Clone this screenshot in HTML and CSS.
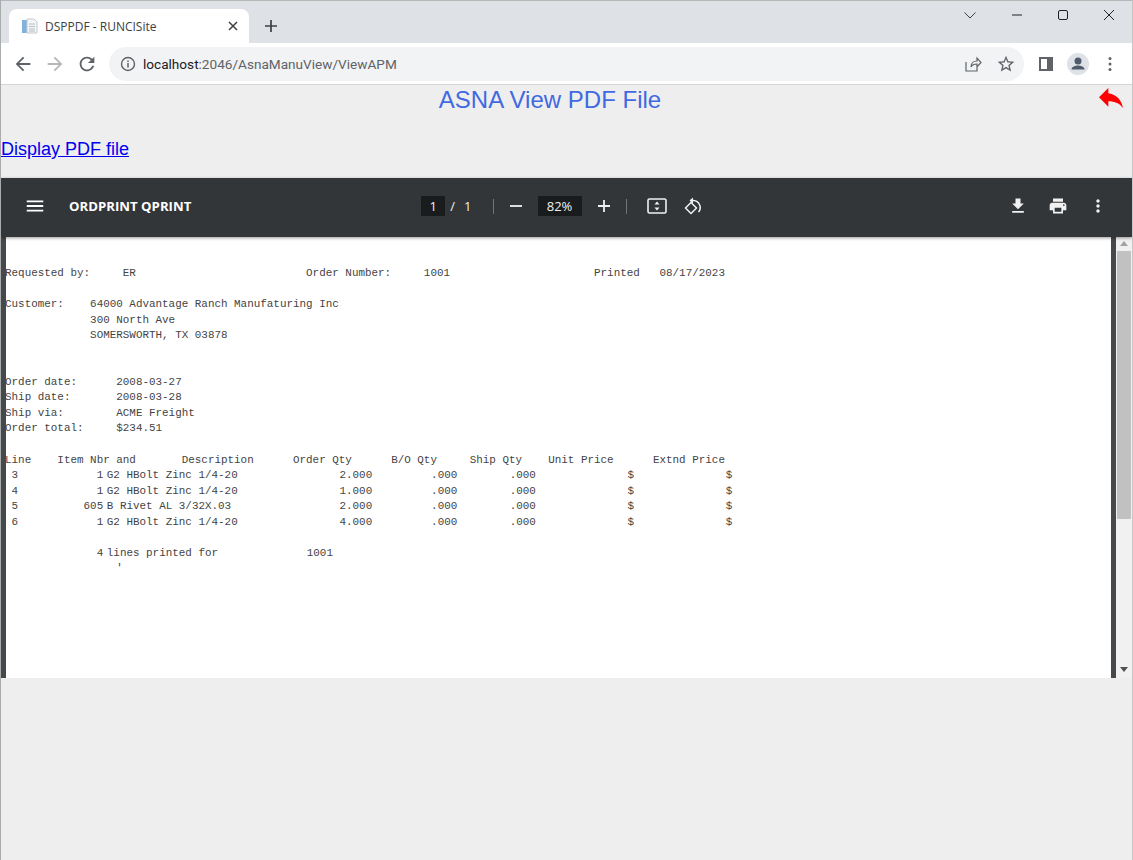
FILE: index.html
```html
<!doctype html>
<html lang="en-us">
<head>
    <meta charset="utf-8">
    <title>DSPPDF - RUNCISite</title>
    <link rel="stylesheet" href="styles.css">
</head>
<body>
    <!-- browser chrome -->
    <div class="tabstrip">
        <div class="tab">
            <svg class="favicon" viewBox="0 0 16 16" width="16" height="16">
                <rect x="0" y="2" width="5" height="13" fill="#7fb2dc"/>
                <path d="M5 1h7l3 3v11H5z" fill="#f3f5f7" stroke="#c3c9cf"/>
                <path d="M7 6h6M7 8.500h6M7 11h6M7 13h6" stroke="#b4bcc4"/>
            </svg>
            <span class="tabTitle">DSPPDF - RUNCISite</span>
            <svg class="tabClose" viewBox="0 0 10 10" width="10" height="10"><path d="M1 1l8 8M9 1l-8 8" stroke="#3c4043" stroke-width="1.500"/></svg>
        </div>
        <svg class="newTab" viewBox="0 0 12 12" width="12" height="12"><path d="M6 0v12M0 6h12" stroke="#3c4043" stroke-width="1.700"/></svg>
        <div class="windowBtns">
            <svg class="tabSearch" viewBox="0 0 12 12" width="12" height="12"><path d="M0.500 3.500l5.500 5.500 5.500-5.500" fill="none" stroke="#3c4043"/></svg>
            <svg viewBox="0 0 12 12" width="12" height="12"><path d="M1 6h10" stroke="#222" stroke-width="1"/></svg>
            <svg viewBox="0 0 12 12" width="12" height="12"><rect x="1.500" y="1.500" width="9" height="9" rx="1.500" fill="none" stroke="#222"/></svg>
            <svg viewBox="0 0 12 12" width="12" height="12"><path d="M1 1l10 10M11 1L1 11" stroke="#222"/></svg>
        </div>
    </div>
    <div class="toolbar">
        <svg class="navIcon" viewBox="0 0 24 24" width="22" height="22"><path fill="#5f6368" d="M20 11H7.830l5.590-5.590L12 4l-8 8 8 8 1.410-1.410L7.830 13H20v-2z"/></svg>
        <svg class="navIcon" viewBox="0 0 24 24" width="22" height="22"><path fill="#b4b7ba" d="M4 11h12.170l-5.590-5.590L12 4l8 8-8 8-1.410-1.410L16.170 13H4v-2z"/></svg>
        <svg class="navIcon" viewBox="0 0 24 24" width="22" height="22"><path fill="#5f6368" d="M17.650 6.350A7.958 7.958 0 0 0 12 4c-4.420 0-7.990 3.580-7.990 8s3.570 8 7.990 8c3.730 0 6.840-2.550 7.730-6h-2.080A5.990 5.990 0 0 1 12 18c-3.310 0-6-2.690-6-6s2.690-6 6-6c1.660 0 3.140.690 4.220 1.780L13 11h7V4l-2.350 2.350z"/></svg>
        <div class="addressBar">
            <svg viewBox="0 0 16 16" width="16" height="16"><circle cx="8" cy="8" r="6.500" fill="none" stroke="#5f6368" stroke-width="1.400"/><path d="M8 7v4.500M8 4.500v1.400" stroke="#5f6368" stroke-width="1.500"/></svg>
            <span class="url"><span class="urlHost">localhost</span>:2046/AsnaManuView/ViewAPM</span>
            <svg class="shareIcon" viewBox="0 0 18 18" width="18" height="18"><path d="M2 7v9h11v-4M7 12c0-4 3-6 6-6V3l4 4.500-4 4.500V9c-3 0-5 1-6 3z" fill="none" stroke="#5f6368" stroke-width="1.200"/></svg>
            <svg viewBox="0 0 24 24" width="20" height="20"><path fill="#5f6368" d="M22 9.240l-7.190-.620L12 2 9.190 8.630 2 9.240l5.460 4.730L5.820 21 12 17.270 18.180 21l-1.630-7.030L22 9.240zM12 15.400l-3.760 2.270 1-4.280-3.320-2.880 4.380-.380L12 6.100l1.710 4.040 4.380.380-3.320 2.880 1 4.280L12 15.400z"/></svg>
        </div>
        <svg class="sideIcon" viewBox="0 0 14 14" width="14" height="14"><rect width="14" height="14" fill="#5f6368"/><rect x="2" y="2" width="6" height="10" fill="#fff"/></svg>
        <div class="avatar">
            <svg viewBox="0 0 22 22" width="22" height="22"><circle cx="11" cy="8" r="3.500" fill="#4f5b6b"/><path d="M4.500 16.500c0-3 4-4 6.500-4s6.500 1 6.500 4z" fill="#4f5b6b"/></svg>
        </div>
        <svg class="chromeMenu" viewBox="0 0 4 16" width="4" height="16"><circle cx="2" cy="2.500" r="1.500" fill="#5f6368"/><circle cx="2" cy="8" r="1.500" fill="#5f6368"/><circle cx="2" cy="13.500" r="1.500" fill="#5f6368"/></svg>
    </div>

    <!-- page -->
    <div class="page">
        <div class="titleRow">
            <h1 class="pageTitle">ASNA View PDF File</h1>
            <svg class="backIcon" viewBox="3 5 18 15" width="24" height="20"><path fill="#f00" d="M10 9V5l-7 7 7 7v-4.100c5 0 8.500 1.600 11 5.100-1-5-4-10-11-11z"/></svg>
        </div>
        <a class="displayLink" href="#">Display PDF file</a>

        <div class="viewer">
            <div class="pdfBar">
                <div class="pdfLeft">
                    <svg viewBox="0 0 24 24" width="22" height="22"><path fill="#fff" d="M3 18h18v-2H3v2zm0-5h18v-2H3v2zm0-7v2h18V6H3z"/></svg>
                    <span class="pdfTitle">ORDPRINT QPRINT</span>
                </div>
                <div class="pdfMiddle">
                    <span class="pageInput">1</span>
                    <span class="pageSlash">/</span>
                    <span class="pageTotal">1</span>
                    <span class="pdfSep"></span>
                    <svg class="zoomOut" viewBox="0 0 14 14" width="14" height="14"><path d="M1 7h12" stroke="#f1f1f1" stroke-width="1.800"/></svg>
                    <span class="zoomInput">82%</span>
                    <svg class="zoomIn" viewBox="0 0 14 14" width="14" height="14"><path d="M1 7h12M7 1v12" stroke="#f1f1f1" stroke-width="1.800"/></svg>
                    <span class="pdfSep second"></span>
                    <svg class="fitIcon" viewBox="0 0 20 18" width="20" height="18"><rect x="1" y="2" width="18" height="14" rx="1.500" fill="none" stroke="#f1f1f1" stroke-width="1.600"/><path d="M10 4.500l2.500 3h-5zM10 13.500l2.500-3h-5z" fill="#f1f1f1"/></svg>
                    <svg class="rotateIcon" viewBox="0 0 20 20" width="20" height="20"><path d="M8 6.500L2.500 12 8 17.500l5.500-5.500z" fill="none" stroke="#f1f1f1" stroke-width="1.500"/><path d="M7.500 4.500h3a7 7 0 0 1 5 11.500" fill="none" stroke="#f1f1f1" stroke-width="1.500"/><path d="M10 1.500L6.500 4.500 10 7.500z" fill="#f1f1f1"/></svg>
                </div>
                <div class="pdfRight">
                    <svg viewBox="0 0 24 24" width="20" height="20"><path fill="#f1f1f1" d="M19 9h-4V3H9v6H5l7 7 7-7zM5 18v2h14v-2H5z"/></svg>
                    <svg viewBox="0 0 24 24" width="20" height="20"><path fill="#f1f1f1" d="M19 8H5c-1.660 0-3 1.340-3 3v6h4v4h12v-4h4v-6c0-1.660-1.340-3-3-3zm-3 11H8v-5h8v5zm3-7c-.550 0-1-.450-1-1s.450-1 1-1 1 .450 1 1-.450 1-1 1zm-1-9H6v4h12V3z"/></svg>
                    <svg viewBox="0 0 24 24" width="20" height="20"><path fill="#f1f1f1" d="M12 8c1.100 0 2-.900 2-2s-.900-2-2-2-2 .900-2 2 .900 2 2 2zm0 2c-1.100 0-2 .900-2 2s.900 2 2 2 2-.900 2-2-.900-2-2-2zm0 6c-1.100 0-2 .900-2 2s.900 2 2 2 2-.900 2-2-.900-2-2-2z"/></svg>
                </div>
            </div>
            <div class="pdfBody">
                <div class="pdfSheet">
                    <div class="report">
                        <div class="line">Requested by:     ER                          Order Number:     1001                      Printed   08/17/2023</div>
                        <div class="line"></div>
                        <div class="line">Customer:    64000 Advantage Ranch Manufaturing Inc</div>
                        <div class="line">             300 North Ave</div>
                        <div class="line">             SOMERSWORTH, TX 03878</div>
                        <div class="line"></div>
                        <div class="line"></div>
                        <div class="line">Order date:      2008-03-27</div>
                        <div class="line">Ship date:       2008-03-28</div>
                        <div class="line">Ship via:        ACME Freight</div>
                        <div class="line">Order total:     $234.51</div>
                        <div class="line"></div>
                        <div class="line">Line    Item Nbr and       Description      Order Qty      B/O Qty     Ship Qty    Unit Price      Extnd Price</div>
                        <div class="line"> 3            1<span class="thin"> </span>G2 HBolt Zinc 1/4-20<span class="thin"> </span>               2.000         .000        .000              $              $</div>
                        <div class="line"> 4            1<span class="thin"> </span>G2 HBolt Zinc 1/4-20<span class="thin"> </span>               1.000         .000        .000              $              $</div>
                        <div class="line"> 5          605<span class="thin"> </span>B Rivet AL 3/32X.03<span class="thin"> </span>                2.000         .000        .000              $              $</div>
                        <div class="line"> 6            1<span class="thin"> </span>G2 HBolt Zinc 1/4-20<span class="thin"> </span>               4.000         .000        .000              $              $</div>
                        <div class="line"></div>
                        <div class="line">              4<span class="thin"> </span>lines printed for<span class="thin"> </span>             1001</div>
                        <div class="line">                 '</div>
                    </div>
                </div>
                <div class="scrollbar">
                    <span class="arrowUp"></span>
                    <span class="thumb"></span>
                    <span class="arrowDown"></span>
                </div>
            </div>
        </div>
    </div>
</body>
</html>
```
FILE: styles.css
```css
html, body {
    width: 100%;
    height: 100%;
}

body {
    margin: 0;
    padding: 0;
    height: 860px;
    overflow: hidden;
    background: #eeeeee;
    font-family: "Liberation Sans", Arial, sans-serif;
    display: flex;
    flex-direction: column;
    box-sizing: border-box;
    border-left: 1px solid #a8acaa;
    border-right: 1px solid #c4c6c8;
}

/* browser chrome */
.tabstrip {
    height: 43px;
    flex: none;
    box-sizing: border-box;
    background: #dee1e6;
    border-top: 1px solid #b3b8b6;
    display: flex;
    align-items: flex-end;
    padding-left: 8px;
}

.tab {
    width: 240px;
    height: 34px;
    box-sizing: border-box;
    background: #fff;
    border-radius: 8px 8px 0 0;
    display: flex;
    align-items: center;
    padding: 0 11px 0 13px;
}

.tabTitle {
    margin-left: 7px;
    flex: 1;
    font-family: "Open Sans", sans-serif;
    font-size: 12px;
    color: #3c4043;
}

.newTab {
    margin: 0 0 11px 16px;
}

.windowBtns {
    margin-left: auto;
    align-self: flex-start;
    display: flex;
    gap: 34px;
    padding: 8px 17px 0 0;
}

.tabSearch {
    margin-right: 1px;
}

.toolbar {
    height: 42px;
    flex: none;
    box-sizing: border-box;
    background: #fff;
    border-bottom: 1px solid #d5d6d8;
    display: flex;
    align-items: center;
    padding: 0 15px 0 11px;
}

.navIcon {
    margin-right: 10px;
}

.addressBar {
    width: 915px;
    height: 34px;
    margin-left: 1px;
    box-sizing: border-box;
    background: #f1f3f4;
    border-radius: 17px;
    display: flex;
    align-items: center;
    padding: 0 8px 0 11px;
}

.url {
    flex: 1;
    margin-left: 7px;
    font-family: Roboto, sans-serif;
    font-size: 13.600px;
    color: #5f6368;
}

.urlHost {
    color: #202124;
}

.shareIcon {
    margin-right: 14px;
}

.sideIcon {
    margin-left: 15px;
}

.avatar {
    width: 22px;
    height: 22px;
    margin-left: 14px;
    border-radius: 50%;
    background: #dee1e6;
}

.chromeMenu {
    margin-left: 19px;
}

/* page content */
.page {
    flex: 1;
    background: #eeeeee;
}

.titleRow {
    display: flex;
    height: 30px;
}

.pageTitle {
    flex: 1;
    margin: 0;
    padding-top: 1px;
    font-size: 24px;
    line-height: 28px;
    font-weight: normal;
    text-align: center;
    color: #4169e1;
}

.backIcon {
    margin: 3px 9px 0 0;
}

.displayLink {
    display: block;
    margin-top: 24px;
    font-size: 18px;
    line-height: 21px;
    color: #0000ee;
}

/* pdf viewer */
.viewer {
    margin-top: 18px;
    height: 500px;
    display: flex;
    flex-direction: column;
}

.pdfBar {
    height: 59px;
    flex: none;
    box-sizing: border-box;
    padding-bottom: 3px;
    background: #323639;
    color: #f1f1f1;
    display: flex;
    align-items: center;
    position: relative;
    box-shadow: 0 1px 3px rgba(0, 0, 0, 0.4);
}

.pdfLeft {
    display: flex;
    align-items: center;
    padding-left: 23px;
}

.pdfTitle {
    margin-left: 23px;
    font-family: "Open Sans", sans-serif;
    font-size: 13.200px;
    font-weight: 700;
    color: #fff;
}

.pdfMiddle {
    margin-left: 230px;
    display: flex;
    align-items: center;
    font-family: "Open Sans", sans-serif;
    font-size: 13px;
}

.pageInput {
    width: 24px;
    height: 20px;
    line-height: 20px;
    text-align: center;
    background: #191b1c;
}

.pageSlash {
    margin-left: 5px;
}

.pageTotal {
    margin-left: 9px;
}

.pdfSep {
    width: 1px;
    height: 15px;
    margin-left: 21px;
    background: #70757a;
}

.pdfSep.second {
    margin-left: 15px;
}

.zoomOut {
    margin-left: 15px;
}

.zoomInput {
    width: 44px;
    height: 20px;
    margin-left: 15px;
    line-height: 20px;
    text-align: center;
    background: #191b1c;
}

.zoomIn {
    margin-left: 15px;
}

.fitIcon {
    margin-left: 20px;
}

.rotateIcon {
    margin-left: 16px;
}

.pdfRight {
    margin-left: auto;
    display: flex;
    gap: 20px;
    padding-right: 24px;
}

.pdfBody {
    flex: 1;
    min-height: 0;
    display: flex;
    background: #45494c;
}

.pdfSheet {
    flex: 1;
    margin: 0 5px 0 5px;
    background: #fff;
    overflow: hidden;
}

.report {
    margin: 29px 0 0 -1px;
    font-family: "Liberation Mono", "Courier New", monospace;
    font-size: 10.920px;
    color: #444;
}

.line {
    height: 15.550px;
    line-height: 15.550px;
    white-space: pre;
}

/* pdf description column is not quite on the character grid */
.thin {
    font-size: 6px;
    line-height: 0;
}

.scrollbar {
    width: 16px;
    flex: none;
    background: #f1f1f1;
    display: flex;
    flex-direction: column;
    align-items: center;
    padding-top: 4px;
    box-sizing: border-box;
}

.arrowUp {
    border: 4px solid transparent;
    border-top: 0;
    border-bottom: 5px solid #a3a3a3;
}

.thumb {
    width: 14px;
    height: 268px;
    margin-top: 5px;
    background: #c1c1c1;
}

.arrowDown {
    margin-top: auto;
    margin-bottom: 6px;
    border: 4px solid transparent;
    border-bottom: 0;
    border-top: 5px solid #505050;
}
```
